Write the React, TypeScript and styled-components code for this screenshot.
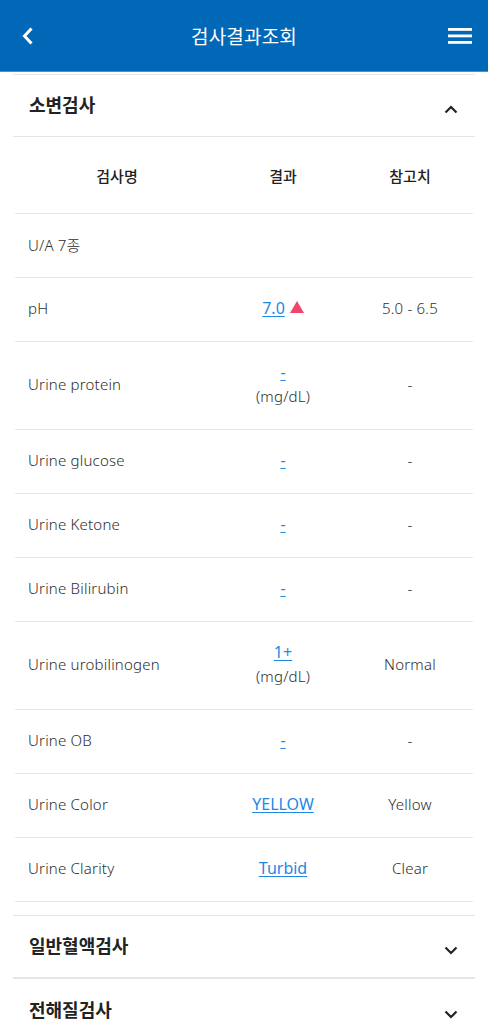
import React from 'react';
import styled, { createGlobalStyle } from 'styled-components';

const GlobalStyle = createGlobalStyle`
  *, *::before, *::after {
    box-sizing: border-box;
  }
  body {
    margin: 0;
    background: #ffffff;
    font-family: "Noto Sans", "Noto Sans CJK KR", sans-serif;
    color: #333333;
  }
`;

interface Row {
  name: string;
  result?: string;
  unit?: string;
  high?: boolean;
  ref?: string;
}

const rows: Row[] = [
  { name: 'U/A 7종' },
  { name: 'pH', result: '7.0', high: true, ref: '5.0 - 6.5' },
  { name: 'Urine protein', result: '-', unit: '(mg/dL)', ref: '-' },
  { name: 'Urine glucose', result: '-', ref: '-' },
  { name: 'Urine Ketone', result: '-', ref: '-' },
  { name: 'Urine Bilirubin', result: '-', ref: '-' },
  { name: 'Urine urobilinogen', result: '1+', unit: '(mg/dL)', ref: 'Normal' },
  { name: 'Urine OB', result: '-', ref: '-' },
  { name: 'Urine Color', result: 'YELLOW', ref: 'Yellow' },
  { name: 'Urine Clarity', result: 'Turbid', ref: 'Clear' },
];

const Page = styled.div`
  width: 488px;
  height: 1024px;
  overflow: hidden;
  background: #fff;
`;

const Header = styled.header`
  height: 72px;
  background: #0068b7;
  border-bottom: 1px solid #3f94d3;
  display: grid;
  grid-template-columns: 56px 1fr 56px;
  align-items: center;
`;

const IconButton = styled.button`
  background: none;
  border: 0;
  padding: 0;
  height: 71px;
  display: flex;
  align-items: center;
  justify-content: center;
  cursor: pointer;
`;

const Title = styled.h1`
  margin: 0;
  text-align: center;
  color: #ffffff;
  font-size: 19px;
  font-weight: 400;
  letter-spacing: 0.2px;
`;

const Content = styled.main`
  padding: 2px 13px 0;
`;

const Section = styled.section<{ $spaced?: boolean }>`
  border-top: 1px solid #e6e6e6;
  margin-top: ${p => (p.$spaced ? '13px' : '0')};
`;

const SectionHead = styled.div<{ $open?: boolean }>`
  height: 62px;
  display: flex;
  align-items: center;
  justify-content: space-between;
  padding: 0 17px 0 16px;
  border-bottom: ${p => (p.$open ? '1px solid #e6e6e6' : '0')};
`;

const SectionTitle = styled.h2`
  margin: 0;
  font-size: 18px;
  font-weight: 700;
  color: #222;
  padding-bottom: 3px;
`;

const Chevron = styled.svg`
  margin-top: 8px;
`;

const Table = styled.div`
  margin: 0 2px;
`;

const TableRow = styled.div<{ $h: number }>`
  display: grid;
  grid-template-columns: 204px 128px 1fr;
  align-items: center;
  height: ${p => p.$h}px;
  border-bottom: 1px solid #e6e6e6;
  font-size: 15px;
  font-weight: 300;
  letter-spacing: 0.2px;
  color: #2e2e2e;
`;

const HeadCell = styled.div`
  text-align: center;
  font-weight: 500;
  letter-spacing: 0;
  color: #222;
  padding-top: 1px;
`;

const NameCell = styled.div`
  padding-left: 13px;
  padding-bottom: 3px;
`;

const Cell = styled.div`
  text-align: center;
  line-height: 24px;
  padding-bottom: 3px;
`;

const ResultLink = styled.a`
  color: #1e88e5;
  font-size: 16px;
  text-decoration: underline;
  text-underline-offset: 2px;
  font-weight: 400;
  letter-spacing: 0;
  cursor: pointer;
`;

const HighMark = styled.span`
  display: inline-block;
  width: 0;
  height: 0;
  margin-left: 5px;
  border-left: 7px solid transparent;
  border-right: 7px solid transparent;
  border-bottom: 12px solid #f2456a;
  vertical-align: 1px;
`;

const Unit = styled.div`
  color: #2e2e2e;
`;

const ChevronIcon = ({ up }: { up?: boolean }) => (
  <Chevron width="14" height="9" viewBox="0 0 14 9">
    <path
      d={up ? 'M1.5 7.5 L7 2 L12.5 7.5' : 'M1.5 1.5 L7 7 L12.5 1.5'}
      fill="none"
      stroke="#222"
      strokeWidth="2.2"
    />
  </Chevron>
);

const App: React.FC = () => {
  return (
    <Page>
      <GlobalStyle />
      <Header>
        <IconButton aria-label="back">
          <svg width="14" height="20" viewBox="0 0 14 20">
            <path d="M10.5 2.5 L3.5 10 L10.5 17.5" fill="none" stroke="#fff" strokeWidth="3" />
          </svg>
        </IconButton>
        <Title>검사결과조회</Title>
        <IconButton aria-label="menu">
          <svg width="25" height="16" viewBox="0 0 25 16">
            <rect x="0" y="0" width="24" height="2.8" fill="#fff" />
            <rect x="0" y="6.5" width="24" height="2.8" fill="#fff" />
            <rect x="0" y="13" width="24" height="2.8" fill="#fff" />
          </svg>
        </IconButton>
      </Header>

      <Content>
        <Section>
          <SectionHead $open>
            <SectionTitle>소변검사</SectionTitle>
            <ChevronIcon up />
          </SectionHead>
          <Table>
            <TableRow $h={77}>
              <HeadCell>검사명</HeadCell>
              <HeadCell>결과</HeadCell>
              <HeadCell>참고치</HeadCell>
            </TableRow>
            {rows.map(r => (
              <TableRow key={r.name} $h={r.unit ? 88 : 64}>
                <NameCell>{r.name}</NameCell>
                <Cell>
                  {r.result && <ResultLink>{r.result}</ResultLink>}
                  {r.high && <HighMark />}
                  {r.unit && <Unit>{r.unit}</Unit>}
                </Cell>
                <Cell>{r.ref}</Cell>
              </TableRow>
            ))}
          </Table>
        </Section>

        <Section $spaced>
          <SectionHead $open>
            <SectionTitle>일반혈액검사</SectionTitle>
            <ChevronIcon />
          </SectionHead>
        </Section>
        <Section>
          <SectionHead>
            <SectionTitle>전해질검사</SectionTitle>
            <ChevronIcon />
          </SectionHead>
        </Section>
      </Content>
    </Page>
  );
};

export default App;
